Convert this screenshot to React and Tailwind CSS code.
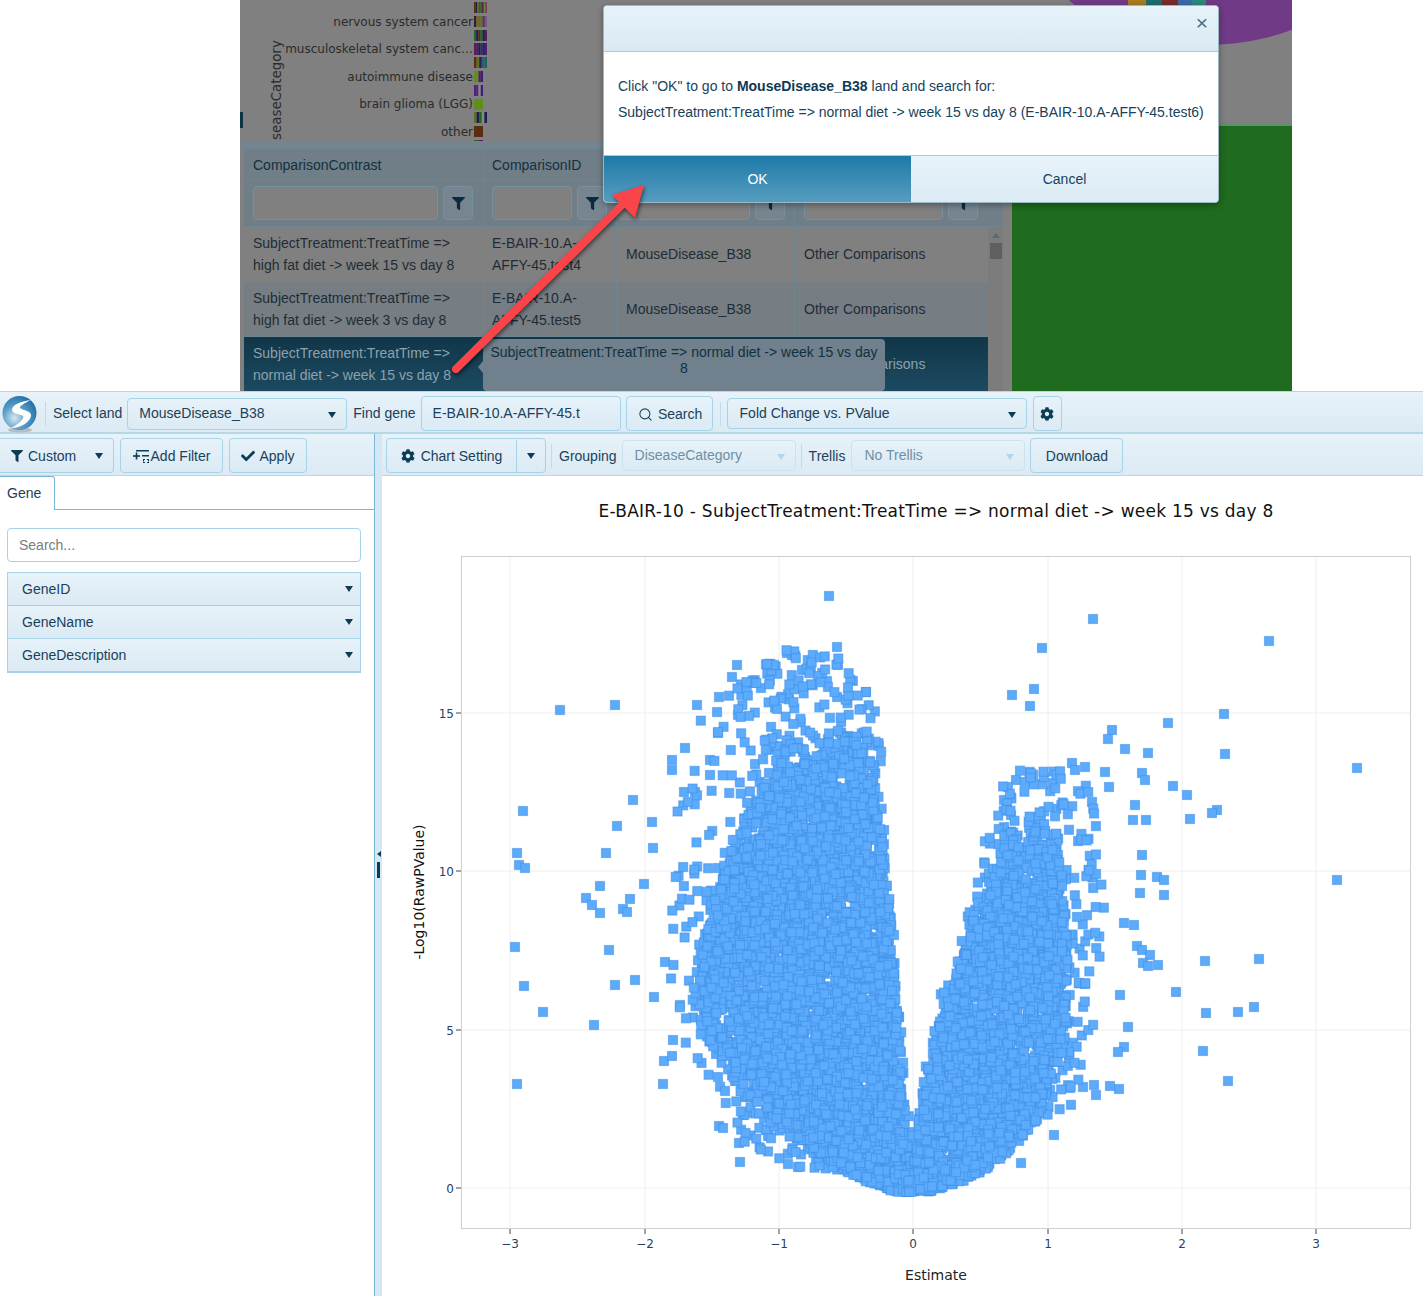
import { useMemo } from 'react';
import { FaFilter, FaCog, FaCheck } from 'react-icons/fa';
import { Search } from 'lucide-react';

const barBg = 'bg-gradient-to-b from-[#e7f2f9] to-[#dbeaf4]';
const btnCls = `flex items-center justify-center rounded-[4px] border border-[#a6d3e8] pt-[1px] ${barBg} text-[#1a4159]`;

function Caret({ className = '' }) {
  return <span className={`inline-block h-0 w-0 border-x-[4.5px] border-t-[6px] border-x-transparent border-t-[#0d3c55] ${className}`} />;
}

function FieldSelect({ value, className = '', disabled }) {
  return (
    <div className={`flex items-center justify-between rounded-[4px] border pl-[11px] pr-[10px] ${disabled ? 'border-[#cbe3f0] text-[#6e8fa3]' : 'border-[#a6d3e8] text-[#1a4159]'} ${barBg} ${className}`}>
      <span>{value}</span>
      {disabled
        ? <span className="mt-[3px] inline-block h-0 w-0 border-x-[4.5px] border-t-[6px] border-x-transparent border-t-[#b4d6e8]" />
        : <Caret className="mt-[3px]" />}
    </div>
  );
}

function Divider({ className = '' }) {
  return <div className={`h-[24px] w-px bg-[#c3dbe8] ${className}`} />;
}

function Logo() {
  return (
    <svg width="37" height="38" viewBox="0 0 37 38" className="ml-[2px] shrink-0">
      <defs>
        <radialGradient id="logoBall" cx="35%" cy="65%" r="75%">
          <stop offset="0%" stopColor="#d8e8f0" />
          <stop offset="45%" stopColor="#5b9fca" />
          <stop offset="100%" stopColor="#1d6aa0" />
        </radialGradient>
      </defs>
      <ellipse cx="18" cy="35" rx="12" ry="2.5" fill="#bbbbbb" />
      <circle cx="17.5" cy="18" r="17" fill="url(#logoBall)" />
      <path d="M29 5 C21 6 10 9 10 15 C10 19 18 19 21 21 C23 23 17 29 9 33 C18 33 29 27 29 20 C29 16 20 15 18 13 C17 11 23 8 29 5 Z" fill="#ffffff" />
    </svg>
  );
}

function AddFilterIcon() {
  return (
    <svg width="16" height="14" viewBox="0 0 16 14" fill="#0d3c55" className="shrink-0">
      <rect x="3" y="1" width="13" height="1.5" />
      <rect x="0" y="6.2" width="7" height="1.6" />
      <rect x="2.7" y="3.5" width="1.6" height="7" />
      <rect x="9" y="6" width="7" height="1.5" />
      <path d="M10 10h2v1h-1v1.5h-1zM14 10h2v2.5h-1V11h-1zM10 13h2v1h-2zM14 13h2v1h-2z" />
    </svg>
  );
}

// little stacked bars peeking out behind the dialog
const bars = [
  [2, 11, ['#5b2c0e', '#1c1c50', '#5f6f1a', '#1e6b1e', '#1e6b1e', '#5b1a5b', '#777733', '#704060']],
  [16, 11, ['#40104a', '#6b6b20', '#6b6b20', '#6b6b20', '#55307a', '#7a5a7a']],
  [30, 11, ['#1c6b1c', '#1c1c60', '#5b2c0e', '#1c6b1c', '#1c1c60', '#5b1a5b']],
  [43, 12, ['#5b1a5b', '#5b1a5b', '#1c1c60', '#30305a', '#1c1c80', '#5b1a5b']],
  [57, 11, ['#5b2c0e', '#5f6f1a', '#3b1a5b', '#1e6b5b', '#1e5f6b']],
  [71, 11, ['#5f8f1a', '#5f8f1a', '#5b1a5b', '#3b2080']],
  [85, 11, ['#55207a', '#55207a', '#888888', '#3b2080']],
  [99, 11, ['#5f8f1a', '#5f8f1a', '#5f8f1a']],
  [112, 11, ['#5f6f1a', '#1c1c50', '#1c6b1c', '#888888', '#1c1c50']],
  [126, 11, ['#5b2c0e', '#5b2c0e', '#5b2c0e']],
  [140, 2, ['#1c6b1c', '#5b1a5b']],
];

const categories = [
  ['nervous system cancer', 26],
  ['musculoskeletal system canc…', 53],
  ['autoimmune disease', 81],
  ['brain glioma (LGG)', 108],
  ['other', 136],
];

function BackgroundChart() {
  return (
    <svg width="772" height="141" viewBox="240 0 772 141" className="block">
      {categories.map(([label, y]) => (
        <text key={label} x="473" y={y} textAnchor="end" fontSize="12" fill="#2b2b2b" fontFamily="'DejaVu Sans', sans-serif">{label}</text>
      ))}
      <text transform="translate(281 140) rotate(-90)" fontSize="13.4" fill="#2b2b2b" fontFamily="'DejaVu Sans', sans-serif">seaseCategory</text>
      {bars.map(([y, h, colors]) => {
        const w = colors.length > 4 ? 13 / colors.length : 9 / colors.length;
        return colors.map((c, i) => (
          <rect key={`${y}-${i}`} x={474 + i * w} y={y} width={w} height={h} fill={c} />
        ));
      })}
    </svg>
  );
}

function FilterCell({ inputW }) {
  return (
    <div className="flex items-center gap-[5px]">
      <div className={`h-[34px] rounded-[4px] border border-[#75909f] bg-[#808080] ${inputW}`} />
      <div className="flex h-[34px] w-[30px] items-center justify-center rounded-[4px] border border-[#75909f] bg-[#76858f]">
        <FaFilter className="text-[13px] text-[#0a2c3f]" />
      </div>
    </div>
  );
}

const rows = [
  { a: ['SubjectTreatment:TreatTime =>', 'high fat diet -> week 15 vs day 8'], b: ['E-BAIR-10.A-', 'AFFY-45.test4'], bg: 'bg-[#808080]' },
  { a: ['SubjectTreatment:TreatTime =>', 'high fat diet -> week 3 vs day 8'], b: ['E-BAIR-10.A-', 'AFFY-45.test5'], bg: 'bg-[#767e84]' },
];

function BackgroundTable() {
  return (
    <div className="ml-[4px] w-[759px] text-[14px] leading-[22px] text-[#14303f]">
      <div className="flex h-[32px] items-center border-y border-[#6e8592] bg-[#707e88] pt-[1px]">
        <div className="flex h-full w-[240px] items-center border-r border-[#6e8592] pl-[9px]">ComparisonContrast</div>
        <div className="flex h-full w-[133px] items-center border-r border-[#6e8592] pl-[8px]">ComparisonID</div>
        <div className="h-full w-[178px] border-r border-[#6e8592]" />
        <div className="h-full flex-1" />
      </div>
      <div className="flex h-[47px] border-b border-[#6e8592] bg-[#707e88]">
        <div className="flex w-[240px] border-r border-[#6e8592] pl-[9px]"><FilterCell inputW="w-[185px]" /></div>
        <div className="flex w-[133px] border-r border-[#6e8592] pl-[8px]"><FilterCell inputW="w-[80px]" /></div>
        <div className="flex w-[178px] border-r border-[#6e8592]"><FilterCell inputW="w-[133px]" /></div>
        <div className="flex flex-1 pl-[9px]"><FilterCell inputW="w-[139px]" /></div>
      </div>
      <div className="flex">
        <div className="w-[744px]">
          {rows.map((r) => (
            <div key={r.b[1]} className={`flex h-[55px] items-center border-b border-[#6e8592] text-[#1f2c35] ${r.bg}`}>
              <div className="flex h-full w-[240px] flex-col justify-center border-r border-[#6e8592] pl-[9px]">{r.a.map((t) => <span key={t}>{t}</span>)}</div>
              <div className="flex h-full w-[133px] flex-col justify-center border-r border-[#6e8592] pl-[8px]">{r.b.map((t) => <span key={t}>{t}</span>)}</div>
              <div className="flex h-full w-[178px] items-center border-r border-[#6e8592] pl-[9px]">MouseDisease_B38</div>
              <div className="pl-[9px]">Other Comparisons</div>
            </div>
          ))}
          <div className="flex h-[54px] items-center bg-gradient-to-b from-[#103648] to-[#1d4a61] text-[#8ea1ac]">
            <div className="flex h-full w-[240px] flex-col justify-center pl-[9px]">
              <span>SubjectTreatment:TreatTime =&gt;</span>
              <span>normal diet -&gt; week 15 vs day 8</span>
            </div>
            <div className="w-[133px]" />
            <div className="w-[178px]" />
            <div className="pl-[9px]">Other Comparisons</div>
          </div>
        </div>
        <div className="flex w-[15px] flex-col items-center bg-[#7c7c7c] pt-[6px]">
          <span className="h-0 w-0 border-x-[4px] border-b-[5px] border-x-transparent border-b-[#5a6972]" />
          <div className="mt-[5px] h-[16px] w-[12px] bg-[#5f5f5f]" />
        </div>
      </div>
    </div>
  );
}

function Dialog() {
  return (
    <div className="absolute left-[603px] top-[5px] flex h-[198px] w-[616px] flex-col overflow-hidden rounded-[4px] border border-[#9cb8c6] bg-white text-[14px] text-[#17425c] shadow-[0_2px_6px_rgba(0,0,0,0.35)]">
      <div className="relative h-[46px] border-b border-[#a9cbdc] bg-gradient-to-b from-[#e7f3fa] to-[#d9e9f3]">
        <span className="absolute right-[10px] top-[6px] text-[21px] leading-[22px] text-[#4e6e80]">×</span>
      </div>
      <div className="flex h-[103px] flex-col pl-[14px] pt-[21px] leading-[26px]">
        <p>Click "OK" to go to <b className="text-[#0e3a55]">MouseDisease_B38</b> land and search for:</p>
        <p>SubjectTreatment:TreatTime =&gt; normal diet -&gt; week 15 vs day 8 (E-BAIR-10.A-AFFY-45.test6)</p>
      </div>
      <div className="flex flex-1 border-t border-[#a9cbdc]">
        <div className="flex w-[307px] items-center justify-center bg-gradient-to-b from-[#1c7aa8] to-[#559dbf] text-white">OK</div>
        <div className="flex flex-1 items-center justify-center bg-gradient-to-b from-[#e7f3fa] to-[#dcebf4]">Cancel</div>
      </div>
    </div>
  );
}

function Arrow() {
  return (
    <svg width="230" height="220" viewBox="440 170 230 220" className="pointer-events-none absolute left-[440px] top-[170px] drop-shadow-[1px_2px_2px_rgba(0,0,0,0.55)]">
      <line x1="456" y1="369" x2="626" y2="201" stroke="#f94449" strokeWidth="8" strokeLinecap="round" />
      <polygon points="644,185 612,195 635,218" fill="#f94449" />
    </svg>
  );
}

function TopPanel() {
  return (
    <div className="relative h-[391px] overflow-hidden bg-white">
      <div className="ml-[240px] flex h-full w-[1052px] bg-[#808080]">
        <div className="relative h-full w-[772px]">
          <div className="absolute left-0 top-0 h-full w-[4px] border-r border-[#72858f]" />
          <div className="absolute left-0 top-[112px] h-[16px] w-[3px] bg-[#0c3346]" />
          <BackgroundChart />
          <div className="h-[7px] bg-[#74858f]" />
          <BackgroundTable />
        </div>
        <div className="flex-1">
          <svg width="280" height="126" viewBox="1012 0 280 126" className="block">
            <ellipse cx="1205" cy="-50" rx="160" ry="95" fill="#703a86" />
            <rect x="1128" y="0" width="18" height="5" fill="#a87a20" />
            <rect x="1146" y="0" width="16" height="5" fill="#1e6b6b" />
            <rect x="1162" y="0" width="16" height="5" fill="#7a2a2a" />
            <rect x="1178" y="0" width="14" height="5" fill="#3a6aa8" />
            <rect x="1192" y="0" width="14" height="5" fill="#2a8a7a" />
            <rect x="1012" y="123" width="280" height="3" fill="#5f8f70" />
          </svg>
          <div className="h-[265px] bg-[#1f6b1f]" />
        </div>
      </div>
      {/* tooltip */}
      <div className="absolute left-[483px] top-[339px] h-[52px] w-[402px] rounded-[4px] bg-[#70808c] px-[6px] pt-[5px] text-center text-[14px] leading-[16px] text-[#12303f]">
        <span className="absolute left-[-5px] top-[22px] h-0 w-0 border-y-[6px] border-r-[5px] border-y-transparent border-r-[#70808c]" />
        SubjectTreatment:TreatTime =&gt; normal diet -&gt; week 15 vs day 8
      </div>
      <Dialog />
      <Arrow />
    </div>
  );
}

function TopToolbar() {
  return (
    <div className={`flex h-[43px] items-center border-b-[2px] border-t border-b-[#b5d8e9] border-t-[#b5d8e9] pt-[3px] ${barBg} text-[14px] text-[#1a4159]`}>
      <Logo />
      <Divider className="ml-[6px]" />
      <span className="ml-[7px]">Select land</span>
      <FieldSelect value="MouseDisease_B38" className="ml-[5px] h-[32px] w-[220px]" />
      <span className="ml-[6px]">Find gene</span>
      <div className={`ml-[5px] flex h-[35px] w-[200px] items-center rounded-[4px] border border-[#a6d3e8] pl-[11px] ${barBg}`}>E-BAIR-10.A-AFFY-45.t</div>
      <div className={`ml-[5px] h-[35px] w-[87px] gap-[5px] pl-[2px] ${btnCls}`}>
        <Search size={15} strokeWidth={1.7} />
        Search
      </div>
      <Divider className="ml-[7px]" />
      <FieldSelect value="Fold Change vs. PValue" className="ml-[6px] h-[31px] w-[300px] pl-[12px]" />
      <div className={`ml-[6px] h-[35px] w-[29px] ${btnCls}`}>
        <FaCog className="text-[14px] text-[#0d3c55]" />
      </div>
    </div>
  );
}

function LeftPanel() {
  return (
    <div className="flex w-[375px] shrink-0 flex-col border-r border-[#7ab8d8] bg-white text-[14px] text-[#1a4159]">
      <div className={`flex h-[42px] shrink-0 items-center gap-[6px] border-b border-[#b5d8e9] pt-[2px] ${barBg}`}>
        <div className={`flex h-[35px] w-[114px] items-center justify-between rounded-r-[4px] border border-l-0 border-[#a6d3e8] pl-[11px] pr-[10px] pt-[1px] ${barBg}`}>
          <span className="flex items-center gap-[5px]"><FaFilter className="text-[12px] text-[#0d3c55]" />Custom</span>
          <Caret />
        </div>
        <div className={`h-[35px] w-[103px] gap-[2px] ${btnCls}`}><AddFilterIcon />Add Filter</div>
        <div className={`h-[35px] w-[78px] gap-[4px] ${btnCls}`}><FaCheck className="text-[14px] text-[#0d3c55]" />Apply</div>
      </div>
      <div className="flex h-[34px] shrink-0">
        <div className="flex w-[55px] items-center rounded-tr-[3px] border-r border-t border-[#7ab8d8] pl-[7px]">Gene</div>
        <div className="flex-1 border-b border-[#7ab8d8]" />
      </div>
      <div className="px-[7px] pt-[18px]">
        <input readOnly placeholder="Search..." className="h-[34px] w-[354px] rounded-[4px] border border-[#a6d3e8] bg-white pl-[11px] outline-none placeholder:text-[#7b7b7b]" />
        <div className="mt-[10px] w-[354px] border-x border-b-[2px] border-[#a6d3e8]">
          {['GeneID', 'GeneName', 'GeneDescription'].map((name) => (
            <div key={name} className={`flex h-[33px] items-center justify-between border-t border-[#a6d3e8] pl-[14px] pr-[7px] ${barBg}`}>
              {name}
              <Caret className="mb-[1px]" />
            </div>
          ))}
        </div>
      </div>
    </div>
  );
}

function Splitter() {
  return (
    <div className="flex w-[7px] shrink-0 flex-col items-center bg-[#d4e7f2] pt-[417px]">
      <span className="h-0 w-0 border-y-[3px] border-r-[4px] border-y-transparent border-r-[#0d3c55]" />
      <div className="mt-[5px] h-[16px] w-[3px] bg-[#0d3c55]" />
    </div>
  );
}

function ChartToolbar() {
  return (
    <div className={`flex h-[42px] shrink-0 items-center border-b border-[#b5d8e9] pl-[4px] pt-[3px] text-[14px] text-[#1a4159] ${barBg}`}>
      <div className="-mt-[1px] flex h-[35px] w-[160px] overflow-hidden rounded-[4px] border border-[#a6d3e8] pt-[1px]">
        <div className="flex w-[130px] items-center justify-center gap-[6px] border-r border-[#a6d3e8]">
          <FaCog className="text-[14px] text-[#0d3c55]" />Chart Setting
        </div>
        <div className="flex flex-1 items-center justify-center"><Caret /></div>
      </div>
      <Divider className="ml-[5px]" />
      <span className="ml-[7px]">Grouping</span>
      <FieldSelect disabled value="DiseaseCategory" className="-mt-[2px] ml-[5px] h-[31px] w-[174px] pl-[12px]" />
      <Divider className="ml-[5px]" />
      <span className="ml-[7px]">Trellis</span>
      <FieldSelect disabled value="No Trellis" className="-mt-[2px] ml-[6px] h-[31px] w-[174px] pl-[12px]" />
      <div className={`-mt-[1px] ml-[5px] h-[35px] w-[93px] ${btnCls}`}>Download</div>
    </div>
  );
}

// piecewise lookup of the volcano outline, [y, left, right] in page pixels
function envelope(table, y) {
  for (let i = 1; i < table.length; i++) {
    if (y <= table[i][0]) {
      const [y0, l0, r0] = table[i - 1];
      const [y1, l1, r1] = table[i];
      const t = (y - y0) / (y1 - y0);
      return [l0 + (l1 - l0) * t, r0 + (r1 - r0) * t];
    }
  }
  return table[table.length - 1].slice(1);
}

const leftCore = [[730, 790, 868], [790, 765, 874], [820, 745, 880], [860, 730, 885], [900, 718, 888], [950, 705, 892], [1000, 695, 896], [1050, 712, 900], [1090, 745, 903], [1120, 775, 906], [1150, 815, 910], [1170, 845, 912], [1185, 880, 914], [1192, 900, 915]];
const leftHalo = [[650, 785, 830], [690, 735, 870], [730, 700, 880], [780, 680, 885], [830, 675, 890], [880, 675, 890], [950, 670, 895], [1010, 680, 895], [1060, 695, 880], [1100, 730, 880], [1140, 745, 880], [1170, 790, 880]];
const rightCore = [[830, 1012, 1055], [880, 995, 1062], [930, 972, 1065], [970, 960, 1068], [1010, 945, 1068], [1050, 935, 1062], [1090, 925, 1050], [1120, 922, 1035], [1150, 918, 1010], [1170, 916, 985], [1185, 910, 950], [1192, 905, 930]];
const rightHalo = [[770, 1005, 1085], [820, 995, 1095], [870, 985, 1100], [920, 965, 1105], [980, 940, 1100], [1040, 930, 1090], [1090, 925, 1080], [1130, 930, 1060]];

const outliers = [
  [829, 596], [837, 647], [1093, 619], [1042, 648], [1269, 641], [1357, 768], [1337, 880], [1224, 714], [1225, 754], [1168, 723],
  [1012, 695], [1034, 689], [1030, 706], [560, 710], [615, 705], [697, 705], [719, 697], [737, 665], [732, 677], [761, 688],
  [787, 653], [792, 655], [802, 670], [810, 671], [827, 681], [828, 687], [866, 692], [523, 811], [517, 853], [519, 865],
  [525, 868], [633, 800], [617, 826], [606, 853], [515, 947], [524, 986], [543, 1012], [594, 1025], [517, 1084], [609, 950],
  [635, 980], [615, 985], [600, 886], [586, 898], [592, 905], [600, 913], [623, 909], [630, 899], [627, 912], [644, 884],
  [653, 848], [652, 822], [1112, 730], [1108, 739], [1125, 749], [1148, 753], [1173, 786], [1187, 795], [1190, 819], [1217, 810],
  [1212, 813], [1146, 820], [1133, 820], [1135, 805], [1142, 773], [1145, 780], [1105, 772], [1092, 802], [1109, 787], [1085, 767],
  [1072, 763], [1075, 770], [1053, 783], [1016, 780], [1008, 787], [1004, 800], [1142, 855], [1141, 875], [1157, 877], [1164, 880],
  [1140, 893], [1164, 895], [1124, 923], [1134, 925], [1137, 946], [1142, 950], [1150, 955], [1143, 963], [1148, 966], [1158, 965],
  [1176, 992], [1205, 961], [1259, 959], [1206, 1013], [1238, 1012], [1254, 1007], [1203, 1051], [1228, 1081], [1128, 1027], [1120, 995],
  [1124, 1047], [1118, 1052], [1119, 1089], [1110, 1086], [1096, 1095], [1094, 1085], [1083, 1087], [1070, 1088], [1054, 1135], [1021, 1163],
  [740, 1162], [739, 1143], [788, 1164], [798, 1167], [816, 1160], [719, 1126], [723, 1128], [663, 1084], [664, 1061], [672, 1056],
  [673, 1040], [718, 1077], [735, 1081], [741, 1085], [745, 1097], [749, 1113], [743, 1115], [766, 1130], [773, 1123], [654, 997],
  [680, 1005], [665, 962], [672, 760], [672, 770], [685, 748], [684, 792], [695, 792], [710, 760], [718, 733], [738, 715],
];

function makePoints() {
  // fixed seed so the cloud is the same on every render
  let s = 20240611;
  const rnd = () => {
    s = (s + 0x6d2b79f5) | 0;
    let t = Math.imul(s ^ (s >>> 15), 1 | s);
    t = (t + Math.imul(t ^ (t >>> 7), 61 | t)) ^ t;
    return ((t ^ (t >>> 14)) >>> 0) / 4294967296;
  };
  const pts = [...outliers];
  const scatter = (table, n, taper) => {
    const y0 = table[0][0];
    const y1 = table[table.length - 1][0];
    for (let i = 0; i < n; i++) {
      const y = y0 + rnd() * (y1 - y0);
      // thin the cloud out toward its top so there's no hard edge
      if (taper && rnd() > Math.min(1, (y - y0) / taper + 0.12)) continue;
      const [l, r] = envelope(table, y);
      const left = l - rnd() * rnd() * 12;
      const right = r + rnd() * rnd() * 5;
      pts.push([left + rnd() * (right - left), y]);
    }
  };
  scatter(leftHalo, 560);
  scatter(rightHalo, 380);
  scatter(leftCore, 4800, 150);
  scatter(rightCore, 2600, 130);
  return pts;
}

const xTicks = [[510, '−3'], [645, '−2'], [779, '−1'], [913, '0'], [1048, '1'], [1182, '2'], [1316, '3']];
const yTicks = [[1188, '0'], [1030, '5'], [871, '10'], [713, '15']];

function VolcanoPlot() {
  const points = useMemo(makePoints, []);
  return (
    <svg width="1041" height="820" viewBox="382 476 1041 820" className="block" fontFamily="'DejaVu Sans', sans-serif">
      <text x="936" y="517" textAnchor="middle" fontSize="17" letterSpacing="0.25" fill="#111111">E-BAIR-10 - SubjectTreatment:TreatTime =&gt; normal diet -&gt; week 15 vs day 8</text>
      {xTicks.map(([x]) => <line key={x} x1={x} x2={x} y1="556" y2="1228" stroke="#eeeeee" />)}
      {yTicks.map(([y]) => <line key={y} x1="461" x2="1410" y1={y} y2={y} stroke="#eeeeee" />)}
      <rect x="461.5" y="556.5" width="949" height="672" fill="none" stroke="#cfcfcf" />
      {points.map(([x, y], i) => (
        <rect key={i} x={x - 4.5} y={y - 4.5} width="9" height="9" fill="#5cabfd" stroke="#3f8fe6" strokeOpacity="0.55" strokeWidth="1.2" />
      ))}
      {xTicks.map(([x, label]) => (
        <g key={label}>
          <line x1={x} x2={x} y1="1229" y2="1234" stroke="#444444" />
          <text x={x} y="1248" textAnchor="middle" fontSize="12" fill="#2a3f5f">{label}</text>
        </g>
      ))}
      {yTicks.map(([y, label]) => (
        <g key={label}>
          <line x1="456" x2="461" y1={y} y2={y} stroke="#444444" />
          <text x="454" y={y + 5} textAnchor="end" fontSize="12" fill="#2a3f5f">{label}</text>
        </g>
      ))}
      <text x="936" y="1280" textAnchor="middle" fontSize="14" fill="#222222">Estimate</text>
      <text transform="translate(424 892) rotate(-90)" textAnchor="middle" fontSize="14" fill="#111111">-Log10(RawPValue)</text>
    </svg>
  );
}

export default function App() {
  return (
    <div className="h-[1296px] overflow-hidden bg-white font-['Liberation_Sans',Arial,sans-serif]">
      <TopPanel />
      <TopToolbar />
      <div className="flex h-[862px]">
        <LeftPanel />
        <Splitter />
        <div className="flex min-w-0 flex-1 flex-col">
          <ChartToolbar />
          <VolcanoPlot />
        </div>
      </div>
    </div>
  );
}
